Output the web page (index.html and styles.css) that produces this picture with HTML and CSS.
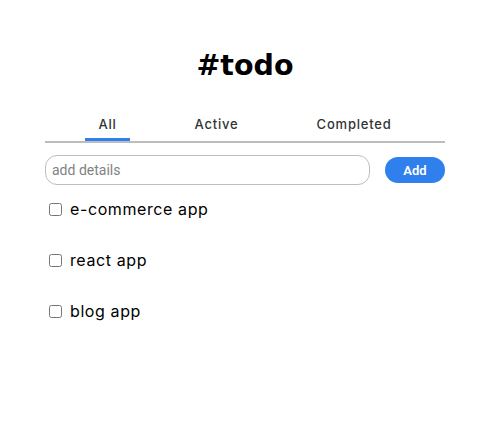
FILE: index.html
```html
<!DOCTYPE html>
<html>
<head>
<meta charset="utf-8">
<link rel="stylesheet" href="styles.css">
</head>
<body>
<div class="app">
  <h1 class="title">#todo</h1>
  <nav class="tabs">
    <span class="tab active">All</span>
    <span class="tab">Active</span>
    <span class="tab">Completed</span>
  </nav>
  <form class="add-form">
    <input class="add-input" type="text" placeholder="add details">
    <button class="add-btn" type="button">Add</button>
  </form>
  <ul class="list">
    <li class="item"><input type="checkbox" class="check"><span>e-commerce app</span></li>
    <li class="item"><input type="checkbox" class="check"><span>react app</span></li>
    <li class="item"><input type="checkbox" class="check"><span>blog app</span></li>
  </ul>
</div>
</body>
</html>
```
FILE: styles.css
```css
* { box-sizing: border-box; }
body {
  margin: 0;
  background: #fff;
  font-family: "Inter", "Open Sans", sans-serif;
  color: #000;
}
.app {
  width: 400px;
  margin: 0 45px;
  padding-top: 49px;
}
.title {
  margin: 0;
  text-align: center;
  font-family: "DejaVu Sans", sans-serif;
  font-size: 28.5px;
  font-weight: 700;
  line-height: 34px;
}
.tabs {
  margin-top: 32px;
  display: flex;
  justify-content: center;
  gap: 52px;
  border-bottom: 2px solid #bdbdbd;
}
.tab {
  padding: 0 13px 5px;
  font-size: 13px;
  font-weight: 500;
  line-height: 18px;
  letter-spacing: 0.8px;
  color: #333;
  border-bottom: 3px solid transparent;
}
.tab.active {
  border-bottom-color: #2f80ed;
}
.add-form {
  display: flex;
  align-items: center;
  justify-content: space-between;
  margin-top: 12px;
}
.add-input {
  width: 325px;
  height: 30px;
  border: 1px solid #bdbdbd;
  border-radius: 12px;
  padding: 0 6px;
  font-family: "Roboto", sans-serif;
  font-size: 14px;
  outline: none;
}
.add-input::placeholder { color: #828282; }
.add-btn {
  width: 60px;
  height: 26px;
  border: none;
  border-radius: 13px;
  background: #2f80ed;
  color: #fff;
  font-family: "Roboto", sans-serif;
  font-weight: 600;
  font-size: 13px;
}
.list {
  list-style: none;
  margin: 14px 0 0;
  padding: 0;
}
.item {
  display: flex;
  height: 51px;
  align-items: flex-start;
  font-size: 16px;
  line-height: 20px;
  letter-spacing: 0.6px;
  color: #000;
}
.check {
  width: 13px;
  height: 13px;
  margin: 4px 8px 0 4px;
}
```
